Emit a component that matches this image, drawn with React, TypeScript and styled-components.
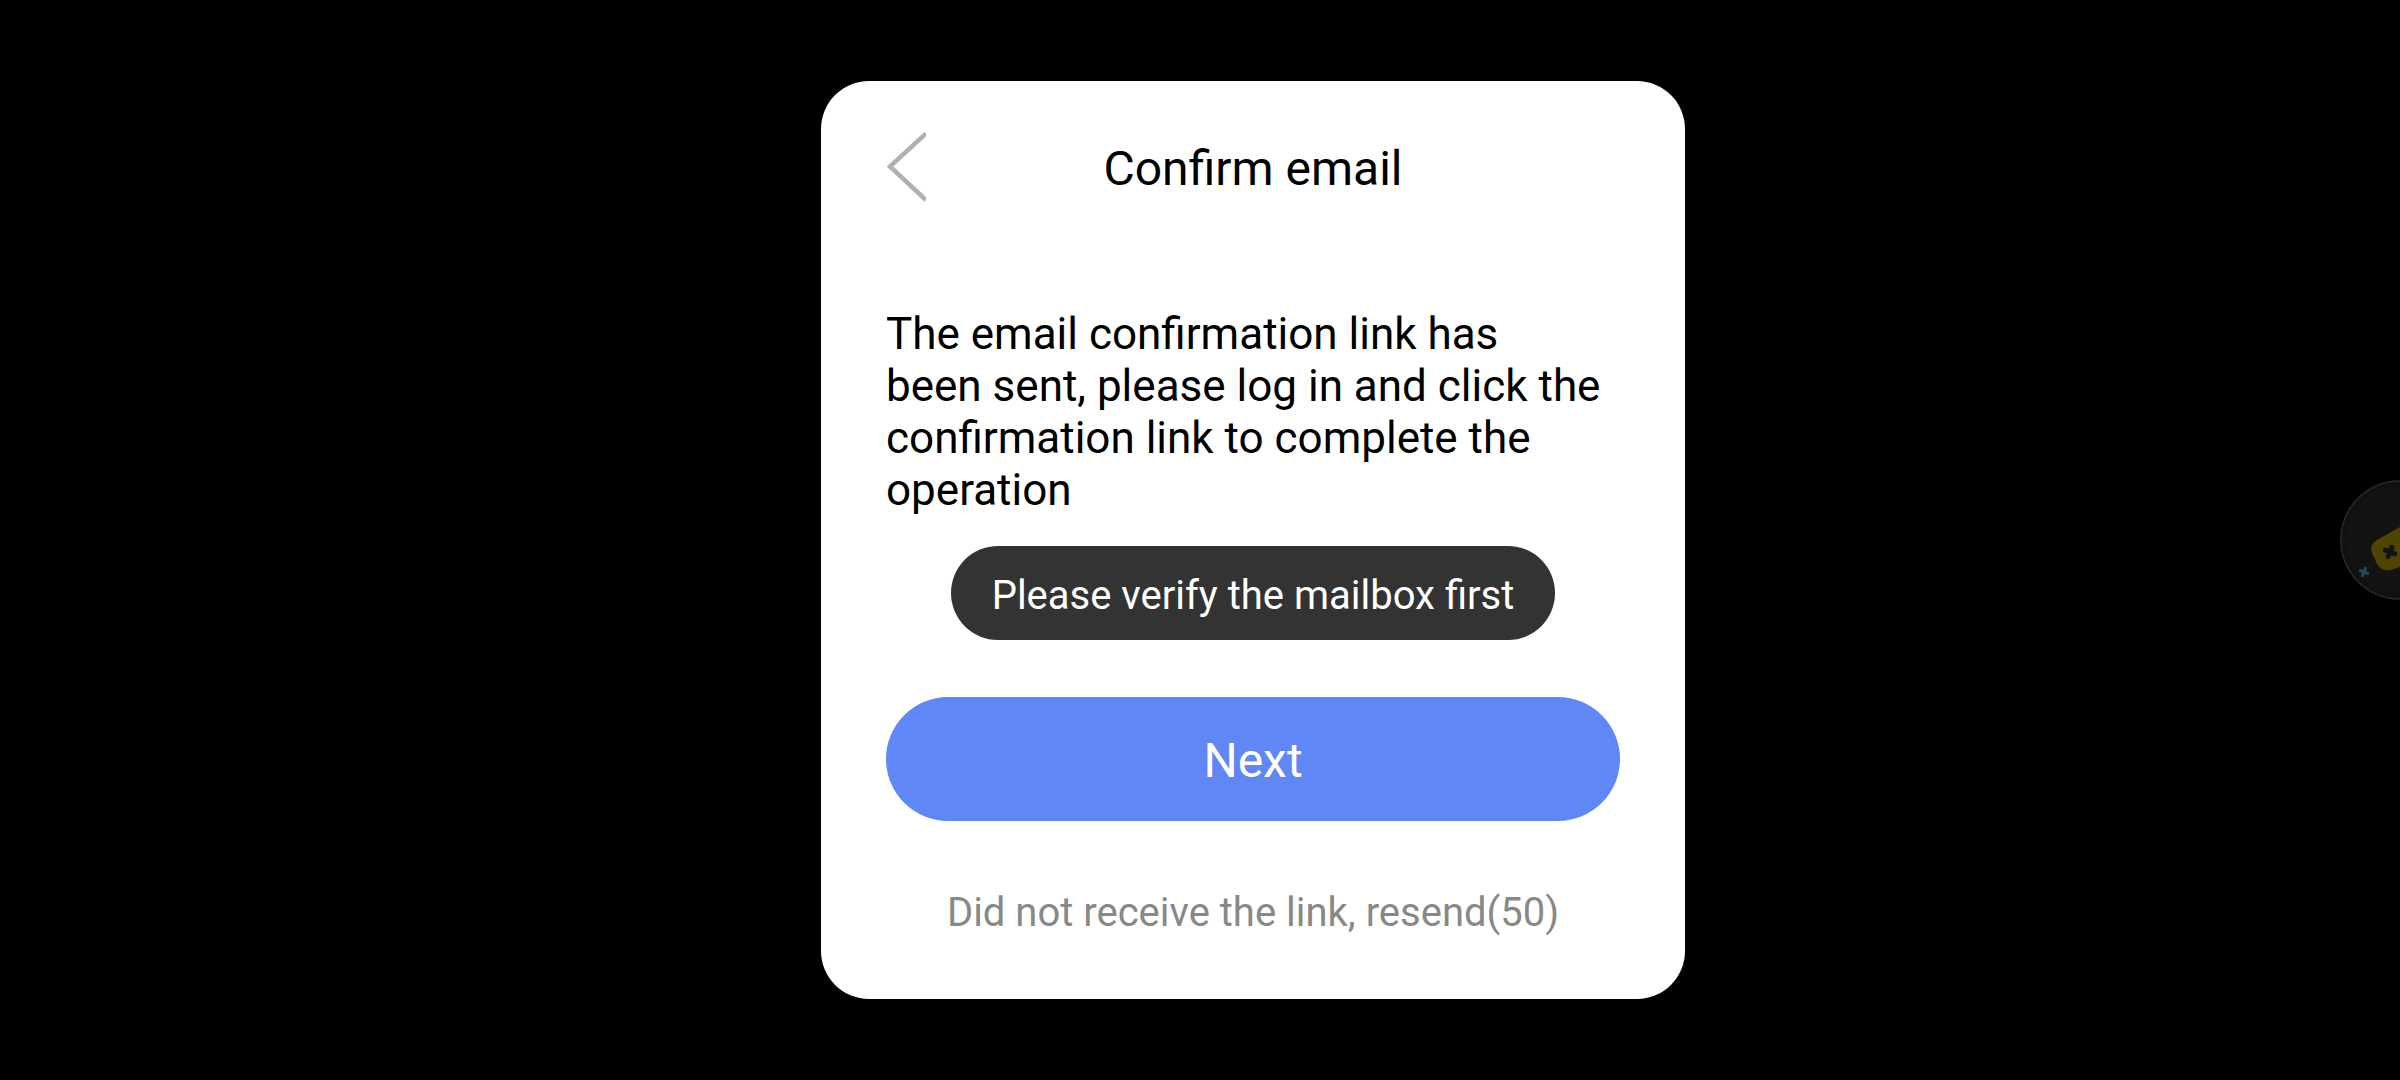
import React from "react";
import styled, { createGlobalStyle } from "styled-components";

const GlobalStyle = createGlobalStyle`
  *, *::before, *::after { box-sizing: border-box; }
  body {
    margin: 0;
    background: #000;
    font-family: Roboto, "Noto Sans", sans-serif;
    color: #000;
  }
  button {
    border: 0;
    padding: 0;
    background: none;
    font-family: inherit;
    cursor: pointer;
  }
`;

const Screen = styled.main`
  display: flex;
  align-items: center;
  justify-content: center;
  min-height: 100vh;
  padding-left: 106px;
`;

const Dialog = styled.section`
  display: flex;
  flex-direction: column;
  width: 100%;
  max-width: 864px;
  padding: 51px 65px 62px;
  border-radius: 48px;
  background: #fff;
`;

const Header = styled.header`
  display: grid;
  grid-template-columns: 40px 1fr 40px;
  align-items: center;
  margin-bottom: 106px;
`;

const BackButton = styled.button`
  display: flex;
  height: 70px;
`;

const Title = styled.h1`
  margin: 0;
  padding-top: 4px;
  font-size: 48px;
  font-weight: 400;
  line-height: 56px;
  text-align: center;
`;

const Message = styled.p`
  margin: 0 0 30px;
  font-size: 44px;
  line-height: 52px;
`;

const Toast = styled.div`
  align-self: center;
  margin-bottom: 57px;
  padding: 26px 41px 20px;
  border-radius: 47px;
  background: #333;
  color: #fff;
  font-size: 40px;
  line-height: 48px;
`;

const NextButton = styled.button`
  padding: 36px 40px 32px;
  border-radius: 62px;
  background: #5f87f6;
  color: #fff;
  font-size: 48px;
  line-height: 56px;
`;

const ResendButton = styled.button`
  align-self: center;
  margin-top: 68px;
  color: #888;
  font-size: 40px;
  line-height: 48px;
`;

const FloatingButton = styled.button`
  position: fixed;
  top: 50%;
  right: 0;
  width: 60px;
  height: 120px;
  margin-top: -60px;
  overflow: hidden;
`;

export default function App() {
  return (
    <>
      <GlobalStyle />
      <Screen>
        <Dialog aria-labelledby="dialog-title">
          <Header>
            <BackButton type="button" aria-label="Back">
              <svg width="40" height="70" viewBox="0 0 40 70" fill="none">
                <path d="M40 1.5L4 34.5L40 68" stroke="#b0b0b0" strokeWidth="4.5" />
              </svg>
            </BackButton>
            <Title id="dialog-title">Confirm email</Title>
          </Header>
          <Message>
            The email confirmation link has
            <br />
            been sent, please log in and click the confirmation link to complete the operation
          </Message>
          <Toast role="status">Please verify the mailbox first</Toast>
          <NextButton type="button">Next</NextButton>
          <ResendButton type="button">Did not receive the link, resend(50)</ResendButton>
        </Dialog>
      </Screen>
      <FloatingButton type="button" aria-label="Game tools">
        <svg width="60" height="120" viewBox="0 0 60 120" fill="none">
          <circle cx="60" cy="60" r="59" fill="#111" stroke="#2b2b2b" strokeWidth="1.5" />
          <circle cx="60" cy="60" r="54" fill="#131313" />
          <path
            d="M60 47L37 60Q29 65 32 73L37 84Q42 92 51 90L60 87Z"
            fill="#4e4500"
          />
          <path
            d="M-5 0H5M0 -5V5"
            transform="translate(50 72) rotate(22)"
            stroke="#131313"
            strokeWidth="5"
            strokeLinecap="round"
          />
          <path
            d="M-4 0H4M0 -4V4"
            transform="translate(24 92) rotate(22)"
            stroke="#1d5058"
            strokeWidth="3"
            strokeLinecap="round"
          />
        </svg>
      </FloatingButton>
    </>
  );
}
